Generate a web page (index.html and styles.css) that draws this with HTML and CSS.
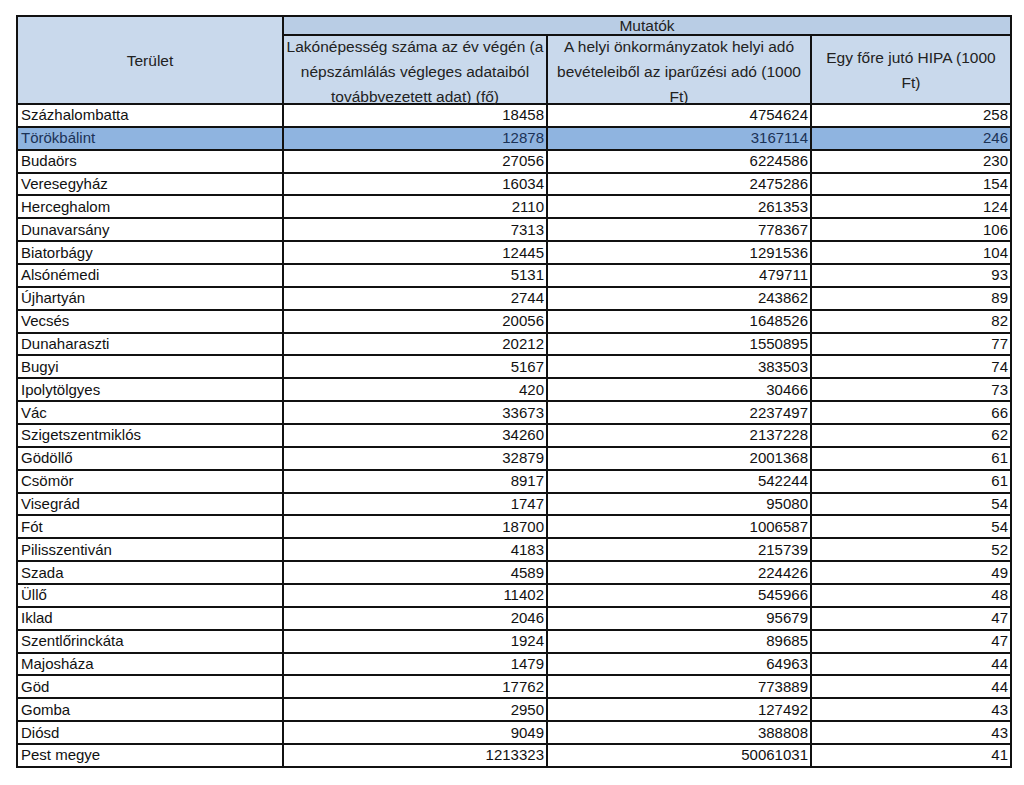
FILE: index.html
```html
<!DOCTYPE html>
<html lang="hu">
<head>
<meta charset="utf-8">
<title>Mutatók</title>
<link rel="stylesheet" href="styles.css">
</head>
<body>
<table class="grid">
  <colgroup>
    <col class="c1"><col class="c2"><col class="c3"><col class="c4">
  </colgroup>
  <thead>
    <tr class="h1">
      <th class="area" rowspan="2"><div class="hwrap">Terület</div></th>
      <th class="group" colspan="3">Mutatók</th>
    </tr>
    <tr class="h2">
      <th><div class="hwrap">Lakónépesség száma az év végén (a népszámlálás végleges adataiból továbbvezetett adat) (fő)</div></th>
      <th><div class="hwrap">A helyi önkormányzatok helyi adó bevételeiből az iparűzési adó (1000 Ft)</div></th>
      <th><div class="hwrap narrow">Egy főre jutó HIPA (1000 Ft)</div></th>
    </tr>
  </thead>
  <tbody>
    <tr><td>Százhalombatta</td><td>18458</td><td>4754624</td><td>258</td></tr>
    <tr class="hl"><td>Törökbálint</td><td>12878</td><td>3167114</td><td>246</td></tr>
    <tr><td>Budaörs</td><td>27056</td><td>6224586</td><td>230</td></tr>
    <tr><td>Veresegyház</td><td>16034</td><td>2475286</td><td>154</td></tr>
    <tr><td>Herceghalom</td><td>2110</td><td>261353</td><td>124</td></tr>
    <tr><td>Dunavarsány</td><td>7313</td><td>778367</td><td>106</td></tr>
    <tr><td>Biatorbágy</td><td>12445</td><td>1291536</td><td>104</td></tr>
    <tr><td>Alsónémedi</td><td>5131</td><td>479711</td><td>93</td></tr>
    <tr><td>Újhartyán</td><td>2744</td><td>243862</td><td>89</td></tr>
    <tr><td>Vecsés</td><td>20056</td><td>1648526</td><td>82</td></tr>
    <tr><td>Dunaharaszti</td><td>20212</td><td>1550895</td><td>77</td></tr>
    <tr><td>Bugyi</td><td>5167</td><td>383503</td><td>74</td></tr>
    <tr><td>Ipolytölgyes</td><td>420</td><td>30466</td><td>73</td></tr>
    <tr><td>Vác</td><td>33673</td><td>2237497</td><td>66</td></tr>
    <tr><td>Szigetszentmiklós</td><td>34260</td><td>2137228</td><td>62</td></tr>
    <tr><td>Gödöllő</td><td>32879</td><td>2001368</td><td>61</td></tr>
    <tr><td>Csömör</td><td>8917</td><td>542244</td><td>61</td></tr>
    <tr><td>Visegrád</td><td>1747</td><td>95080</td><td>54</td></tr>
    <tr><td>Fót</td><td>18700</td><td>1006587</td><td>54</td></tr>
    <tr><td>Pilisszentiván</td><td>4183</td><td>215739</td><td>52</td></tr>
    <tr><td>Szada</td><td>4589</td><td>224426</td><td>49</td></tr>
    <tr><td>Üllő</td><td>11402</td><td>545966</td><td>48</td></tr>
    <tr><td>Iklad</td><td>2046</td><td>95679</td><td>47</td></tr>
    <tr><td>Szentlőrinckáta</td><td>1924</td><td>89685</td><td>47</td></tr>
    <tr><td>Majosháza</td><td>1479</td><td>64963</td><td>44</td></tr>
    <tr><td>Göd</td><td>17762</td><td>773889</td><td>44</td></tr>
    <tr><td>Gomba</td><td>2950</td><td>127492</td><td>43</td></tr>
    <tr><td>Diósd</td><td>9049</td><td>388808</td><td>43</td></tr>
    <tr><td>Pest megye</td><td>1213323</td><td>50061031</td><td>41</td></tr>
  </tbody>
</table>
</body>
</html>
```

FILE: styles.css
```css
html, body {
  margin: 0;
  padding: 0;
  background: #ffffff;
}

body {
  padding: 15px 0 0 16px;
  font-family: "Liberation Sans", Arial, sans-serif;
  font-size: 15px;
  color: #111111;
}

.grid {
  border-collapse: collapse;
  table-layout: fixed;
  width: 994px;
}

.c1 { width: 266px; }
.c2 { width: 264px; }
.c3 { width: 264px; }
.c4 { width: 200px; }

.grid th,
.grid td {
  border: 2px solid #111111;
  padding: 0;
  overflow: visible;
}

.grid th {
  font-weight: normal;
  font-size: 15.5px;
  text-align: center;
  background: #c9d9ec;
  color: #222222;
  vertical-align: middle;
}

.grid th.group {
  background: #b9cde5;
  height: 17px;
  line-height: 17px;
}

.hwrap {
  height: 66px;
  display: flex;
  align-items: center;
  justify-content: center;
  line-height: 25px;
  padding: 0 2px;
}

.h2 .hwrap {
  padding-top: 3px;
  height: 63px;
}

.h2 .hwrap.narrow {
  padding: 0 12px;
  height: 66px;
}

.grid th.area .hwrap {
  height: 86px;
  padding: 0;
}

.grid td {
  height: 20.86px;
  line-height: 18px;
  vertical-align: middle;
  text-align: right;
  padding: 0 2px 0 3px;
}

.grid td:first-child {
  text-align: left;
}

.hl td {
  background: #8fb4e0;
  color: #1b3256;
}
```
